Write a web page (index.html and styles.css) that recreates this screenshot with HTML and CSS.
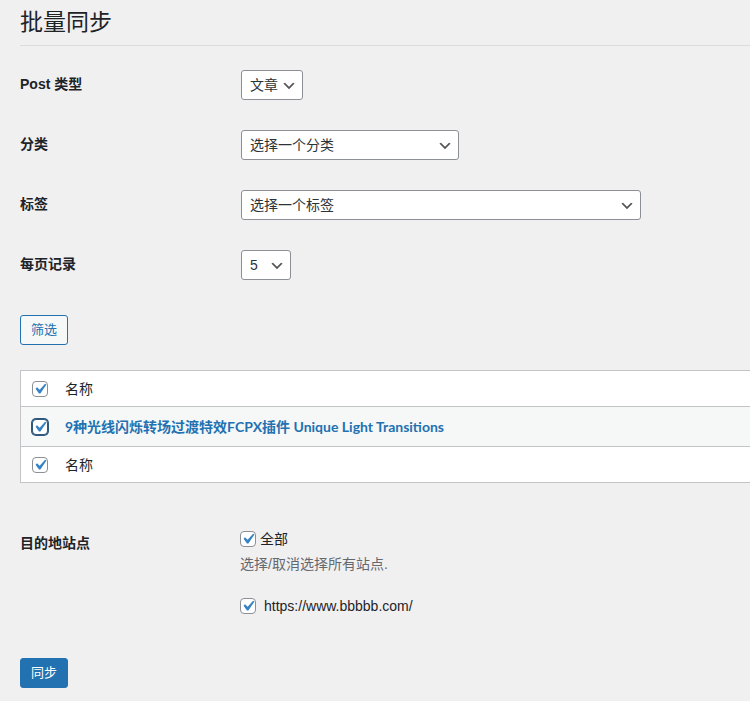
FILE: index.html
```html
<!DOCTYPE html>
<html lang="zh-CN">
<head>
    <meta charset="UTF-8">
    <meta name="viewport" content="width=device-width, initial-scale=1.0">
    <title>批量同步</title>
    <link rel="stylesheet" href="styles.css">
</head>
<body>

<div class="wrap">
    <h1>批量同步</h1>

    <form id="bulk-sync-form">
        <!-- Filter options -->
        <div class="form-table">
            <div class="form-row">
                <label class="row-label" for="post-type">Post 类型</label>
                <div class="row-field">
                    <select id="post-type" class="select-post-type">
                        <option>文章</option>
                        <option>页面</option>
                    </select>
                </div>
            </div>
            <div class="form-row">
                <label class="row-label" for="category">分类</label>
                <div class="row-field">
                    <select id="category" class="select-category">
                        <option>选择一个分类</option>
                    </select>
                </div>
            </div>
            <div class="form-row">
                <label class="row-label" for="tag">标签</label>
                <div class="row-field">
                    <select id="tag" class="select-tag">
                        <option>选择一个标签</option>
                    </select>
                </div>
            </div>
            <div class="form-row">
                <label class="row-label" for="per-page">每页记录</label>
                <div class="row-field">
                    <select id="per-page" class="select-per-page">
                        <option>5</option>
                        <option>10</option>
                        <option>20</option>
                    </select>
                </div>
            </div>
        </div>

        <button type="button" class="button filter-btn">筛选</button>

        <!-- Post list -->
        <table class="post-list">
            <thead>
            <tr>
                <td class="check-col"><input type="checkbox" checked></td>
                <td>名称</td>
            </tr>
            </thead>
            <tbody>
            <tr>
                <td class="check-col"><input type="checkbox" class="focused" checked></td>
                <td><a href="#" class="post-title">9种光线闪烁转场过渡特效FCPX插件 Unique Light Transitions</a></td>
            </tr>
            </tbody>
            <tfoot>
            <tr>
                <td class="check-col"><input type="checkbox" checked></td>
                <td>名称</td>
            </tr>
            </tfoot>
        </table>

        <!-- Destination sites -->
        <div class="sites-row">
            <div class="row-label sites-label">目的地站点</div>
            <div class="row-field">
                <label class="check-line"><input type="checkbox" checked> 全部</label>
                <p class="description">选择/取消选择所有站点.</p>
                <label class="check-line site-line"><input type="checkbox" checked> https://www.bbbbb.com/</label>
            </div>
        </div>

        <button type="submit" class="button button-primary">同步</button>
    </form>
</div>

</body>
</html>
```

FILE: styles.css
```css
/* styles.css */
body {
    margin: 0;
    background-color: #f0f0f1;
    color: #1d2327;
    font-family: "Liberation Sans", "Noto Sans CJK SC", sans-serif;
    font-size: 14px;
    overflow: hidden;
}

.wrap {
    width: 780px;
    margin-left: 20px;
    padding-top: 8px;
}

h1 {
    margin: 0;
    padding-bottom: 8px;
    font-size: 23px;
    font-weight: 400;
    line-height: 29px;
    border-bottom: 1px solid #dcdcde;
}

.form-table {
    margin-top: 9px;
}

.form-row {
    display: grid;
    grid-template-columns: 221px 1fr;
    align-items: center;
    height: 60px;
}

.row-label {
    font-weight: 600;
    line-height: 22px;
    margin-top: -2px;
}

select {
    appearance: none;
    height: 30px;
    padding: 0 24px 0 8px;
    font-family: inherit;
    font-size: 14px;
    color: #2c3338;
    background: #fff url("data:image/svg+xml;charset=US-ASCII,%3Csvg%20width%3D%2220%22%20height%3D%2220%22%20xmlns%3D%22http%3A%2F%2Fwww.w3.org%2F2000%2Fsvg%22%3E%3Cpath%20d%3D%22M5%206l5%205%205-5%202%201-7%207-7-7%202-1z%22%20fill%3D%22%23555%22%2F%3E%3C%2Fsvg%3E") no-repeat right 5px top 55%;
    background-size: 16px 16px;
    border: 1px solid #8c8f94;
    border-radius: 3px;
    vertical-align: middle;
}

.select-post-type { width: 62px; }
.select-category { width: 218px; }
.select-tag { width: 400px; }
.select-per-page { width: 50px; }

.button {
    display: block;
    height: 30px;
    padding: 0 10px;
    font-family: inherit;
    font-size: 13px;
    line-height: 28px;
    color: #2271b1;
    background-color: #f6f7f7;
    border: 1px solid #2271b1;
    border-radius: 3px;
    cursor: pointer;
}

.filter-btn {
    margin-top: 20px;
}

.button-primary {
    margin-top: 41px;
    color: #fff;
    background-color: #2271b1;
}

/* checkboxes */
input[type="checkbox"] {
    appearance: none;
    width: 16px;
    height: 16px;
    margin: 0;
    background: #fff;
    border: 1px solid #8c8f94;
    border-radius: 4px;
    vertical-align: middle;
}

input[type="checkbox"]:checked {
    background: #fff url("data:image/svg+xml;charset=US-ASCII,%3Csvg%20xmlns%3D%22http%3A%2F%2Fwww.w3.org%2F2000%2Fsvg%22%20viewBox%3D%220%200%2020%2020%22%3E%3Cpath%20d%3D%22M14.83%204.89l1.34.94-5.81%208.38H9.02L5.78%209.67l1.34-1.25%202.57%202.4z%22%20fill%3D%22%233582c4%22%2F%3E%3C%2Fsvg%3E") no-repeat center;
    background-size: 21px 21px;
}

input[type="checkbox"].focused {
    border-color: #2f587c;
    box-shadow: 0 0 0 1px #2f587c;
}

/* post list */
.post-list {
    width: 100%;
    margin-top: 25px;
    border-collapse: collapse;
    background-color: #fff;
    border: 1px solid #c3c4c7;
}

.post-list td {
    padding: 0 10px 0 0;
    border-top: 1px solid #c3c4c7;
    line-height: 22px;
}

.post-list thead td,
.post-list tfoot td {
    height: 35px;
}

.post-list tbody td {
    height: 39px;
    background-color: #f6f7f7;
}

.post-list .check-col {
    width: 33px;
    padding: 0 0 0 11px;
}

.post-list .check-col input {
    display: block;
}

.post-title {
    color: #2271b1;
    font-family: Lato, "Noto Sans CJK SC", sans-serif;
    font-weight: 700;
    text-decoration: none;
}

/* destination sites */
.sites-row {
    display: grid;
    grid-template-columns: 220px 1fr;
    margin-top: 45px;
}

.sites-label {
    margin-top: 4px;
}

.check-line {
    display: flex;
    align-items: center;
    gap: 4px;
    line-height: 22px;
}

.site-line {
    gap: 8px;
    margin-top: 20px;
}

.description {
    margin: 3px 0 0;
    color: #646970;
    line-height: 22px;
}
```
